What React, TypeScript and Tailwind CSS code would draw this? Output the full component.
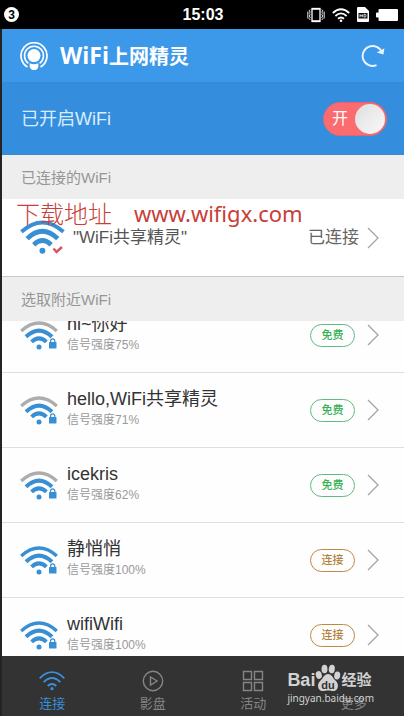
import { useState } from 'react'
import type { ReactNode } from 'react'

interface Network {
  name: string
  strength: number
  free: boolean
}

const networks: Network[] = [
  { name: 'hi~你好', strength: 75, free: true },
  { name: 'hello,WiFi共享精灵', strength: 71, free: true },
  { name: 'icekris', strength: 62, free: true },
  { name: '静悄悄', strength: 100, free: false },
  { name: 'wifiWifi', strength: 100, free: false },
]

function WifiArcs({ outer = '#388fd3' }: { outer?: string }) {
  return (
    <g fill="none" stroke="#388fd3" strokeWidth="3.4">
      <path d="M1.2 10Q19 -5.8 36.8 10" stroke={outer} />
      <path d="M6 15.8Q19 3.4 32 15.8" strokeWidth="4" />
      <path d="M11.6 20.9Q19 14 26.4 20.9" strokeWidth="4" />
      <circle cx="19" cy="26" r="2.5" fill="#388fd3" stroke="none" />
    </g>
  )
}

function SignalIcon({ full }: { full: boolean }) {
  return (
    <svg viewBox="0 0 38 29" className="h-[29px] w-[38px] shrink-0" aria-hidden="true">
      <WifiArcs outer={full ? '#388fd3' : '#adadad'} />
      {/* lock */}
      <rect x="29" y="21" width="7.5" height="6.5" rx="0.6" fill="#388fd3" />
      <path d="M30.6 21.4V20a2.1 2.1 0 0 1 4.2 0v1.4" fill="none" stroke="#388fd3" strokeWidth="1.2" />
    </svg>
  )
}

function ConnectedIcon() {
  return (
    <svg viewBox="0 0 45 36" className="h-9 w-[45px] shrink-0" aria-hidden="true">
      <g transform="scale(1.18)">
        <WifiArcs />
      </g>
      <path d="M33.5 28.5l3 3.5 5.5-5" fill="none" stroke="#d9536a" strokeWidth="2.4" />
    </svg>
  )
}

function Chevron() {
  return (
    <svg viewBox="0 0 12 22" className="h-[22px] w-3 shrink-0" fill="none" stroke="#a3a3a8" strokeWidth="1.3" aria-hidden="true">
      <path d="M1 1l10 10L1 21" />
    </svg>
  )
}

function StatusBar() {
  return (
    <div className="grid h-[29px] shrink-0 grid-cols-3 items-center bg-black pr-1.5 pl-1 text-white">
      <span className="flex size-[15px] items-center justify-center rounded-full bg-white text-xs font-bold text-black">3</span>
      <span className="pl-1 text-center text-base font-bold">15:03</span>
      <div className="flex items-center justify-end gap-[7px]">
        <svg viewBox="0 0 18 16" className="h-4 w-[18px]" fill="none" stroke="#fff" aria-hidden="true">
          <rect x="5" y="1.5" width="8" height="13" strokeWidth="1.3" />
          <path d="M5 2h8M5 14h8" strokeWidth="1.6" />
          <path d="M3.2 2.5l-1 1.3 1 1.3-1 1.3 1 1.3-1 1.3 1 1.3-1 1.3 1 1.3M14.8 2.5l1 1.3-1 1.3 1 1.3-1 1.3 1 1.3-1 1.3 1 1.3-1 1.3M.8 4.5v7M17.2 4.5v7" strokeWidth="0.9" />
        </svg>
        <svg viewBox="0 0 18 14" className="h-3.5 w-[18px]" fill="none" stroke="#fff" strokeWidth="1.8" aria-hidden="true">
          <path d="M.8 5Q9-2.4 17.2 5M3.4 8Q9 2.8 14.6 8M6 10.8q3-2.6 6 0" />
          <circle cx="9" cy="12.7" r="1.3" fill="#fff" stroke="none" />
        </svg>
        <svg viewBox="0 0 12 15" className="h-[15px] w-3" aria-hidden="true">
          <path d="M1 0h7l4 4v10a1 1 0 0 1-1 1H1a1 1 0 0 1-1-1V1a1 1 0 0 1 1-1z" fill="#fff" />
          <rect x="1.5" y="6" width="9" height="5.5" fill="#111" />
          <path d="M3 7.2v3M5.3 7.2v3M3 8.7h2.3M7 7.2v3h.8q1.2 0 1.2-1.5T7.8 7.2z" fill="none" stroke="#fff" strokeWidth="0.8" />
        </svg>
        <svg viewBox="0 0 22 12" className="h-3 w-[22px]" fill="#fff" aria-hidden="true">
          <rect x="2.5" width="19.5" height="12" rx="1" />
          <rect y="3.5" width="3" height="5" rx="0.8" />
        </svg>
      </div>
    </div>
  )
}

function Header() {
  return (
    <header className="flex h-[54px] shrink-0 items-center border-b border-[#3789d2] bg-[#3c98e9] pr-[19px] pl-[18px]">
      <svg viewBox="0 0 28 28" className="size-7" fill="none" stroke="#fff" aria-hidden="true">
        <path d="M7.5 25A13 13 0 1 1 20.5 25" strokeWidth="1.7" />
        <path d="M8.3 21.3A9.5 9.5 0 1 1 19.7 21.3" strokeWidth="1.6" />
        <circle cx="14" cy="13.6" r="6.5" fill="#fff" stroke="none" />
        <path d="M9.600 21.3q4.400 2 8.800 0v2.600a4.400 4.400 0 0 1-8.800 0z" fill="#fff" stroke="none" />
      </svg>
      <h1 className="ml-3 flex flex-1 items-baseline font-['Open_Sans','Noto_Sans_CJK_SC',sans-serif] text-xl leading-7 font-bold text-white">
        <span className="text-[23px]">WiFi</span>
        <span>上网精灵</span>
      </h1>
      <button type="button" aria-label="刷新">
        <svg viewBox="0 0 24 24" className="size-6" fill="none" stroke="#e9f6ff" strokeWidth="1.9" aria-hidden="true">
          <path d="M15.500 21.200A10 10 0 1 1 21 8.500" />
          <path d="M15.800 8.600l6.600 1.900 1-6.300z" fill="#e9f6ff" stroke="none" />
        </svg>
      </button>
    </header>
  )
}

function SectionTitle({ children }: { children: ReactNode }) {
  return (
    <h2 className="flex h-11 shrink-0 items-center bg-[#eeeeee] pt-0.5 pl-[19px] text-[15px] text-[#969696]">{children}</h2>
  )
}

function NetworkRow({ network }: { network: Network }) {
  return (
    <li className="flex h-[75px] items-center border-b border-[#dedede] pr-[25px] pl-[18px]">
      <SignalIcon full={network.strength === 100} />
      <div className="ml-[9px] flex-1 pb-1">
        <div className="text-lg leading-6 text-[#333333]">{network.name}</div>
        <div className="text-xs leading-[18px] text-[#999999]">信号强度{network.strength}%</div>
      </div>
      <button
        type="button"
        className={`mr-3 h-[23px] w-[45px] rounded-full border text-[11px] font-medium ${
          network.free ? 'border-[#5cbd7e] text-[#35b052]' : 'border-[#bd8a43] text-[#b0813a]'
        }`}
      >
        {network.free ? '免费' : '连接'}
      </button>
      <Chevron />
    </li>
  )
}

function NavIcon({ name }: { name: string }) {
  return (
    <svg viewBox="0 0 26 22" className="h-[22px] w-[26px]" fill="none" stroke="currentColor" strokeWidth="1.4" aria-hidden="true">
      {name === 'wifi' && (
        <g strokeWidth="1.9">
          <path d="M.7 8.300Q13-4 25.300 8.300M4.700 12.200Q13 4 21.300 12.200M8.700 16Q13 11.800 17.300 16" />
          <circle cx="13" cy="18.7" r="1.6" fill="currentColor" stroke="none" />
        </g>
      )}
      {name === 'play' && (
        <>
          <circle cx="13" cy="11" r="9.7" />
          <path d="M10.500 7v8l6.500-4z" />
        </>
      )}
      {name === 'grid' && (
        <path d="M3.500 1.500h8v8h-8zM14.500 1.500h8v8h-8zM3.500 12.500h8v8h-8zM14.500 12.500h8v8h-8z" />
      )}
    </svg>
  )
}

const tabs = [
  { icon: 'wifi', label: '连接' },
  { icon: 'play', label: '影盘' },
  { icon: 'grid', label: '活动' },
  { icon: 'more', label: '更多' },
]

function Watermark() {
  return (
    <div className="pointer-events-none absolute right-[30px] bottom-3 text-[#d2d2d2]">
      <div className="flex h-7 items-end">
        <span className="text-lg leading-6 font-bold">Bai</span>
        <svg viewBox="0 0 26 28" className="h-7 w-[26px]" fill="currentColor" aria-hidden="true">
          <ellipse cx="3.8" cy="11" rx="3" ry="4" transform="rotate(-15 3.8 11)" />
          <ellipse cx="9.5" cy="5" rx="3" ry="4.3" />
          <ellipse cx="16.8" cy="5" rx="3" ry="4.3" transform="rotate(8 16.8 5)" />
          <ellipse cx="22.2" cy="11.500" rx="3" ry="4" transform="rotate(10 22.2 11.5)" />
          <path d="M13 10c4 0 4.500 4 7.500 6.500 4 3.500 3 10.500-2 10.500-2 0-3-.5-5.500-.5s-3.500.5-5.500.5c-5 0-6-7-2-10.500 3-2.500 3.500-6.500 7.500-6.500z" />
          <text x="13" y="24.500" textAnchor="middle" fontSize="11" fontWeight="bold" fill="#333333">du</text>
        </svg>
        <span className="text-[15px] leading-6 font-bold">经验</span>
      </div>
      <div className="font-['Noto_Sans',sans-serif] text-[10px] leading-3">jingyan.baidu.com</div>
    </div>
  )
}

function TabBar() {
  return (
    <nav className="relative grid h-[60px] shrink-0 grid-cols-4 bg-[#333333]">
      {tabs.map(({ icon, label }, i) => (
        <button
          key={label}
          type="button"
          className={`flex flex-col items-center pt-3.5 text-[13px] leading-6 ${i === 0 ? 'text-[#398fda]' : 'text-[#858585]'}`}
        >
          <NavIcon name={icon} />
          {label}
        </button>
      ))}
      <Watermark />
    </nav>
  )
}

export default function App() {
  const [enabled, setEnabled] = useState(true)

  return (
    <div className="flex h-screen flex-col bg-black font-['Liberation_Sans','Noto_Sans_CJK_SC',sans-serif]">
      <StatusBar />
      <div className="flex min-h-0 flex-1 flex-col border-l-2 border-[#252422]">
        <Header />
        <div className="flex h-[72px] shrink-0 items-center justify-between bg-[#358edd] pr-[17px] pl-[19px]">
          <label htmlFor="wifi-switch" className="text-lg text-[#d8edff]">已开启WiFi</label>
          <label className="flex h-[34px] w-16 cursor-pointer items-center justify-between rounded-full border border-[#dc6877] bg-[#fc6b70] pr-px pl-2">
            <input
              id="wifi-switch"
              type="checkbox"
              checked={enabled}
              onChange={() => setEnabled(!enabled)}
              className="sr-only"
            />
            <span className="text-base text-white">{enabled ? '开' : '关'}</span>
            <span className="size-[30px] rounded-full bg-linear-to-br from-[#dedede] to-[#fafafa]" />
          </label>
        </div>

        <SectionTitle>已连接的WiFi</SectionTitle>
        <div className="relative flex h-[78px] shrink-0 items-center border-b border-[#c8c8c8] bg-white pr-[25px] pl-[18px]">
          <ConnectedIcon />
          <span className="ml-2 flex-1 text-[17px] text-[#555555]">"WiFi共享精灵"</span>
          <span className="mr-2 text-[17px] text-[#666666]">已连接</span>
          <Chevron />
          <p className="absolute top-0 left-3.5 flex gap-[22px] text-[#c8403a]">
            <span className="font-['Noto_Sans_CJK_SC',sans-serif] text-2xl leading-7 font-light">下载地址</span>
            <span className="font-['Noto_Sans',sans-serif] text-[22px] leading-7">www.wifigx.com</span>
          </p>
        </div>

        <SectionTitle>选取附近WiFi</SectionTitle>
        <div className="min-h-0 flex-1 overflow-hidden bg-[#fefefe]">
          {/* list is scrolled slightly under the section title */}
          <ul className="-mt-[23px]">
            {networks.map((network) => (
              <NetworkRow key={network.name} network={network} />
            ))}
          </ul>
        </div>

        <TabBar />
      </div>
    </div>
  )
}
